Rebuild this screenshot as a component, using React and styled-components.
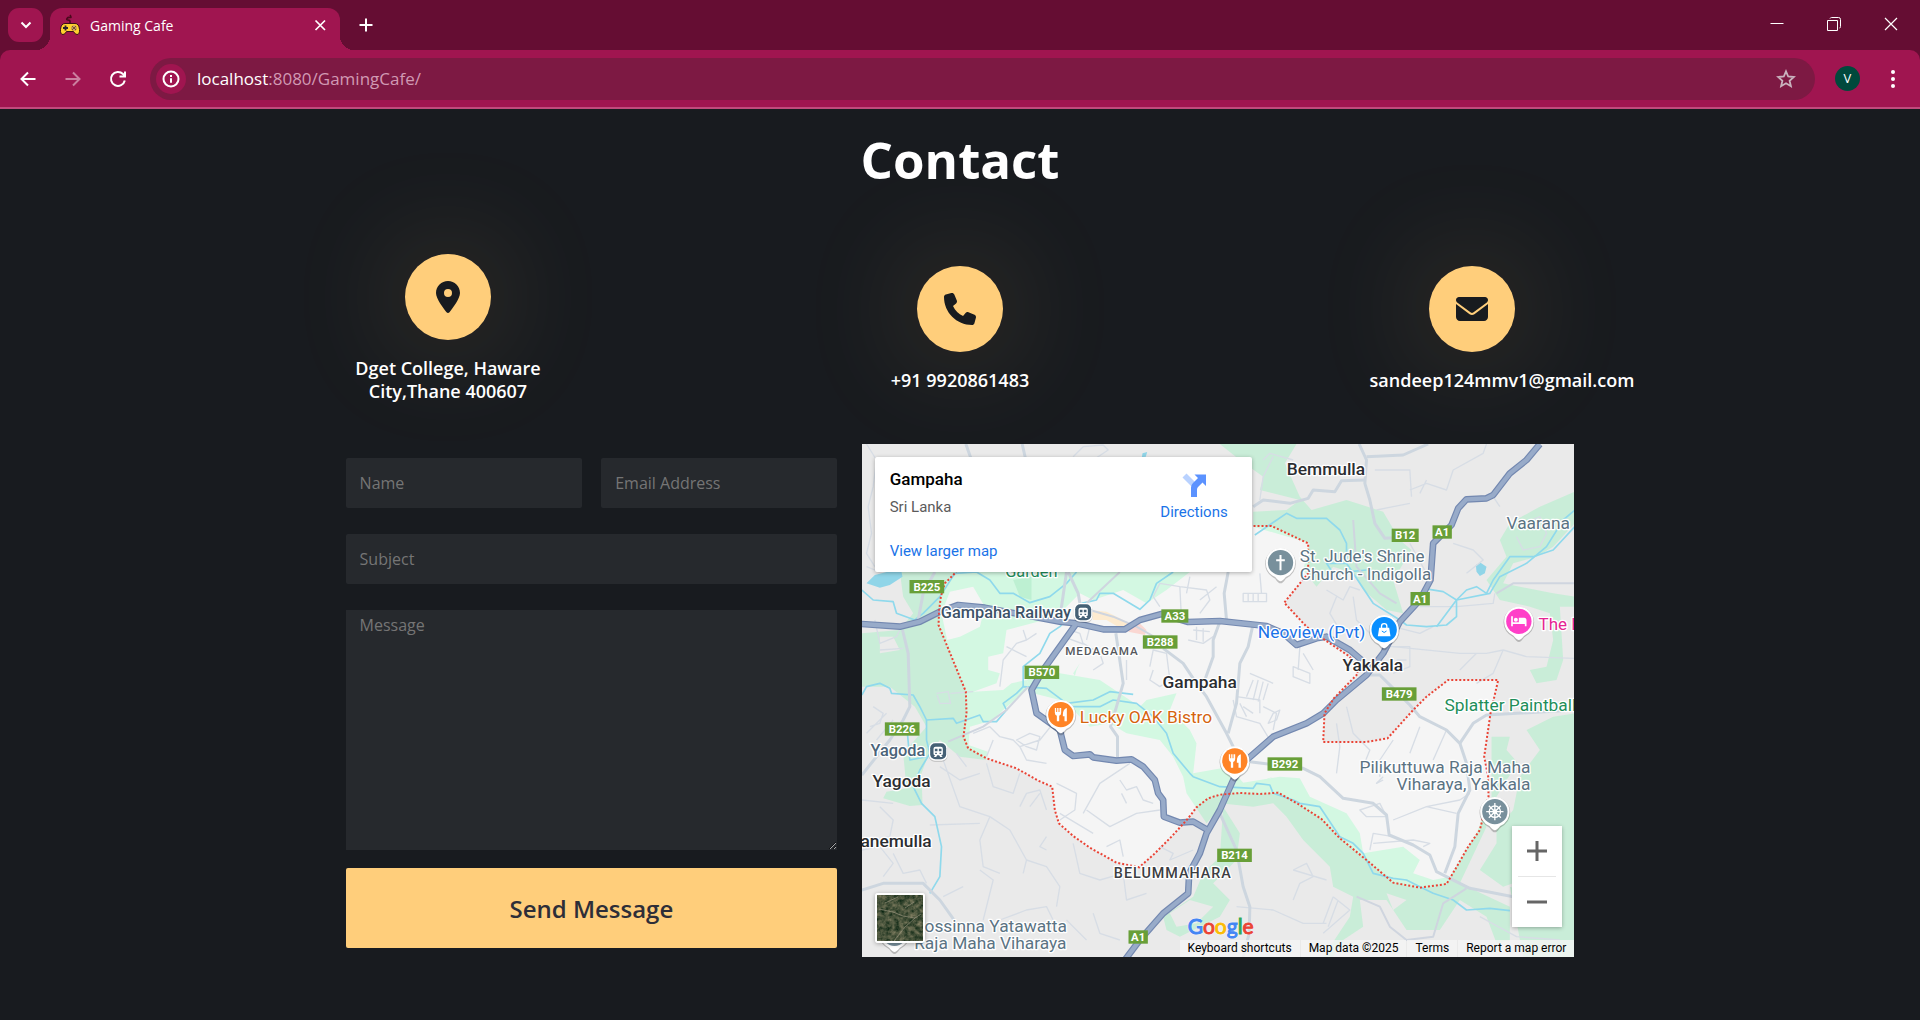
import React from "react";
import styled, { createGlobalStyle, css } from "styled-components";
import { FaLocationDot, FaPhone, FaEnvelope } from "react-icons/fa6";

const c = {
  frame: "#650d33",
  toolbar: "#a01550",
  omnibox: "#7d1943",
  page: "#181b1f",
  field: "#26292d",
  accent: "#ffce7b",
  link: "#1a73e8",
};

const uiFont = '"Segoe UI", "Open Sans", "Noto Sans", sans-serif';
const pageFont = '"Trebuchet MS", "Open Sans", "Noto Sans", sans-serif';
const mapFont = 'Roboto, "Liberation Sans", sans-serif';

const GlobalStyle = createGlobalStyle`
  *, *::before, *::after { box-sizing: border-box; }
  body { margin: 0; background: ${c.page}; font-family: ${pageFont}; }
  button { font: inherit; border: 0; padding: 0; background: none; color: inherit; cursor: pointer; }
  h1, h2, p { margin: 0; }
`;

/* ---------- browser frame ---------- */

const Screen = styled.div`
  min-height: 100vh;
  display: flex;
  flex-direction: column;
  overflow: hidden;
`;

const TabStrip = styled.header`
  display: flex;
  height: 50px;
  padding: 8px 1px 0 8px;
  background: ${c.frame};
  color: #fff;
  font-family: ${uiFont};
`;

const TabSearch = styled.button`
  display: grid;
  place-items: center;
  width: 35px;
  height: 34px;
  margin-right: 7px;
  border-radius: 11px;
  background: ${c.toolbar};
`;

const Tab = styled.div`
  position: relative;
  display: flex;
  align-items: center;
  gap: 10px;
  width: 290px;
  height: 42px;
  padding: 0 10px 8px 10px;
  border-radius: 12px 12px 0 0;
  background: ${c.toolbar};
  font-size: 14px;

  &::before,
  &::after {
    content: "";
    position: absolute;
    bottom: 0;
    width: 14px;
    height: 14px;
  }
  &::before {
    right: 100%;
    background: radial-gradient(circle at 0 0, transparent 14px, ${c.toolbar} 14px);
  }
  &::after {
    left: 100%;
    background: radial-gradient(circle at 100% 0, transparent 14px, ${c.toolbar} 14px);
  }
`;

const TabTitle = styled.span`
  flex: 1;
`;

const FlatButton = styled.button`
  display: grid;
  place-items: center;
  width: ${(p) => p.$w || 20}px;
  height: ${(p) => p.$h || 20}px;
  opacity: ${(p) => (p.disabled ? 0.45 : 1)};
`;

const NewTab = styled(FlatButton)`
  margin: 3px 0 0 12px;
`;

const WindowButtons = styled.div`
  display: flex;
  margin-left: auto;
`;

const ToolbarBack = styled.div`
  background: ${c.frame};
`;

const Toolbar = styled.div`
  display: flex;
  align-items: center;
  height: 59px;
  padding: 0 10px 0 5px;
  border-bottom: 2px solid #c04a7c;
  border-radius: 10px 10px 0 0;
  background: ${c.toolbar};
  color: #fff;
  font-family: ${uiFont};
`;

const Omnibox = styled.div`
  flex: 1;
  display: flex;
  align-items: center;
  height: 42px;
  margin: 0 20px 0 10px;
  padding: 0 19px 0 6px;
  border-radius: 21px;
  background: ${c.omnibox};
`;

const SiteInfo = styled.button`
  display: grid;
  place-items: center;
  width: 30px;
  height: 30px;
  margin-right: 11px;
  border-radius: 50%;
  background: ${c.toolbar};
`;

const Address = styled.div`
  flex: 1;
  font-size: 17px;
  color: #d19ab3;
  outline: none;

  strong {
    font-weight: 400;
    color: #fff;
  }
`;

const Avatar = styled.button`
  width: 25px;
  height: 25px;
  margin-right: 15px;
  border-radius: 50%;
  background: #00493c;
  font-size: 13px;
  line-height: 25px;
`;

/* ---------- contact page ---------- */

const Page = styled.main`
  flex: 1;
  color: #fff;
`;

const Heading = styled.h1`
  padding-top: 14px;
  text-align: center;
  font-size: 51px;
  line-height: 72px;
  font-weight: 700;
`;

const Channels = styled.section`
  display: flex;
  align-items: center;
  width: 80%;
  margin: 59px auto 0;
`;

const ChannelCell = styled.div`
  flex: 1 1 0;
  min-width: 0;
  display: flex;
  justify-content: center;
`;

const Channel = styled.div`
  width: 40%;
  display: flex;
  flex-direction: column;
  align-items: center;
`;

const Disc = styled.div`
  display: grid;
  place-items: center;
  width: 86px;
  height: 86px;
  border-radius: 50%;
  background: ${c.accent};
  color: ${c.page};
  font-size: 32px;
  box-shadow: 0 0 120px rgba(255, 206, 123, 0.22);
`;

const ChannelText = styled.p`
  position: relative;
  width: 100%;
  margin-top: 17px;
  text-align: center;
  font-size: 18px;
  line-height: 23px;
  font-weight: 600;
`;

const Lower = styled.section`
  display: flex;
  justify-content: space-between;
  width: 64%;
  margin: 41px auto 0;
`;

const Form = styled.form`
  width: 40%;
  display: grid;
  grid-template-columns: 48% 48%;
  justify-content: space-between;
  align-content: start;
  row-gap: 26px;
  padding-top: 14px;
`;

const fieldStyle = css`
  display: block;
  width: 100%;
  border: 0;
  border-radius: 2px;
  outline: none;
  background: ${c.field};
  color: #fff;
  font-family: ${pageFont};
  font-size: 16px;

  &::placeholder {
    color: #757575;
  }
`;

const Input = styled.input`
  ${fieldStyle}
  grid-column: ${(p) => (p.$wide ? "1 / -1" : "auto")};
  height: 50px;
  padding: 0 14px;
`;

const TextArea = styled.textarea`
  ${fieldStyle}
  grid-column: 1 / -1;
  height: 240px;
  padding: 4px 14px;
  border-radius: 0;
  resize: vertical;
`;

const Submit = styled.button`
  grid-column: 1 / -1;
  height: 80px;
  margin-top: -8px;
  border-radius: 2px;
  background: ${c.accent};
  color: #2e2e38;
  font-size: 24px;
  font-weight: 600;
`;

/* ---------- map ---------- */

const MapFrame = styled.div`
  position: relative;
  width: 58%;
  height: 513px;
  overflow: hidden;
  background: #ebebeb;
  font-family: ${mapFont};
`;

const MapDrawing = styled.svg`
  display: block;
  width: 100%;
  height: 100%;
`;

const PlaceCard = styled.div`
  position: absolute;
  top: 13px;
  left: 13px;
  display: flex;
  justify-content: space-between;
  width: 377px;
  height: 115px;
  padding: 12px 24px 11px 15px;
  border-radius: 2px;
  background: #fff;
  box-shadow: 0 1px 4px rgba(0, 0, 0, 0.3);
  font-size: 15px;
  line-height: 20px;
`;

const PlaceInfo = styled.div`
  display: flex;
  flex-direction: column;
  color: #5b5b5b;
`;

const PlaceName = styled.h2`
  margin-bottom: 7px;
  color: #000;
  font-size: 17px;
  line-height: 21px;
  font-weight: 500;
`;

const MapLink = styled.a`
  display: flex;
  flex-direction: column;
  align-items: center;
  gap: 4px;
  margin-top: ${(p) => (p.$low ? "auto" : "3px")};
  color: ${c.link};
  text-decoration: none;
`;

const Zoom = styled.div`
  position: absolute;
  right: 12px;
  bottom: 30px;
  width: 50px;
  padding: 0 6px;
  background: #fff;
  box-shadow: 0 1px 4px rgba(0, 0, 0, 0.3);
`;

const ZoomButton = styled.button`
  display: grid;
  place-items: center;
  width: 100%;
  height: 50px;

  & + & {
    height: 51px;
    border-top: 1px solid #e6e6e6;
  }
`;

const Satellite = styled.button`
  position: absolute;
  left: 13px;
  bottom: 14px;
  width: 50px;
  height: 50px;
  overflow: hidden;
  border: 2px solid #fff;
  border-radius: 3px;
  box-shadow: 0 1px 4px rgba(0, 0, 0, 0.3);

  svg {
    display: block;
  }
`;

const Logo = styled.a`
  position: absolute;
  left: 326px;
  bottom: 18px;
  font-family: Lato, ${mapFont};
  font-size: 21px;
  line-height: 26px;
  font-weight: 400;
  text-decoration: none;
  text-shadow: 0 0 2px #fff, 0 0 2px #fff;
`;

const Letter = styled.span`
  color: ${(p) => p.$color};
  -webkit-text-stroke: 1px ${(p) => p.$color};
`;

const Credits = styled.div`
  position: absolute;
  right: 0;
  bottom: 0;
  display: flex;
  gap: 1px;
  height: 17px;
  color: #000;
  font-size: 12px;
  line-height: 17px;

  & > * {
    padding: 0 8px;
    background: rgba(245, 245, 245, 0.8);
    color: inherit;
    font-size: 12px;
    text-decoration: none;
  }
`;

/* Map artwork, drawn in a 2139 x 1539 unit space. */

const boundary =
  "M330 330 285 400 255 430 243 470 238 510 236 555 275 650 318 755 320 820 311 890 325 925 380 955 470 985 535 1022 577 1040 585 1110 597 1150 640 1188 690 1223 770 1268 838 1282 880 1245 935 1190 985 1135 1010 1102 1045 1075 1080 1064 1140 1059 1200 1062 1255 1058 1315 1092 1385 1137 1440 1195 1520 1260 1600 1328 1680 1343 1760 1332 1785 1290 1825 1220 1860 1170 1870 1130 1886 1070 1885 1010 1873 950 1892 820 1915 720 1765 720 1700 770 1660 810 1583 895 1520 906 1390 906 1394 820 1422 775 1495 700 1470 650 1395 600 1340 560 1273 488 1345 400 1345 310 1235 258 1180 258 1000 240Z";

const parks = [
  "M6 580 120 570 160 520 130 470 120 396 990 396 920 450 860 490 790 450 700 480 660 460 590 530 440 570 430 640 385 650 385 690 420 700 410 730 340 755 430 750 455 730 500 720 512 740 430 810 400 840 330 860 326 915 384 935 378 960 300 950 240 900 200 960 185 1000 188 1095 150 1098 70 1075 80 1055 140 1045 130 940 200 860 165 800 90 740 6 740Z",
  "M1080 12H1310L1275 70 1320 170 1355 210 1460 180 1570 215 1620 300 1655 330 1600 420 1630 520 1580 510 1510 450 1480 400 1420 380 1370 440 1330 390 1350 310 1180 260V215L1280 210 1320 180 1200 150 1210 110 1140 60Z",
  "M2145 155 2040 200 1950 250 1920 300 1940 350 1880 420 1920 480 2010 500 2070 520 2080 600 2060 680 2010 690 2030 730 2090 720 2110 660 2100 500H2145V470L2080 460 1930 430 1960 370 2030 350 2080 320 2145 250Z",
  "M2145 820 2080 830 2000 870 2040 930 1980 1010 1960 1110 1910 1170V1210L1860 1290 1930 1340 1960 1330V1430L2145 1470Z",
  "M1895 890H1950L1940 930 1975 970 1940 1020 1910 1070 1895 1120Z",
  "M1080 1070 1140 1030 1260 1010 1320 1015 1350 1070 1460 1120 1500 1180 1510 1240 1630 1220 1680 1260 1660 1300 1720 1320 1770 1310 1850 1180 1870 1130 1880 1160 1800 1330 1950 1400V1500L1910 1510 1880 1430 1800 1380 1740 1470 1640 1470 1580 1380 1500 1380 1510 1460 1450 1500 1420 1551H1390L1470 1430 1480 1370 1420 1340 1410 1280 1330 1200 1280 1130 1240 1090 1180 1100 1080 1090Z",
  "M500 720 560 690 600 700 720 720 840 800 860 780 950 760 930 810 990 870 1010 910 1000 1000 1110 980 1160 1040 1240 1010 1100 1080 1040 1150 980 1060 970 1010 940 950 900 900 800 880 750 850 690 860 640 810 600 780 520 760Z",
  "M1080 1250 1030 1300 1000 1370 910 1430 920 1470 960 1490 1080 1430 1110 1380 1060 1330 1130 1260 1140 1180 1090 1100Z",
  "M640 700 660 670 650 690 645 708Z",
  "M1950 1340 2145 1400V1551H1990Z",
];

const clearings = [
  "M270 455 340 440 375 500 360 560 300 590 262 600 245 520Z",
  "M20 470 110 470 150 520 110 560 40 530Z",
  "M60 590 100 590 120 630 60 640Z",
  "M930 1420 990 1380 1060 1400 1010 1450 950 1460Z",
  "M1580 1360 1640 1380 1600 1410Z",
];

const water = [
  "M6 450 40 480 100 485 110 520 165 540 190 520 240 470 285 400 350 396 390 420 420 460 460 460 510 488 570 470 620 430 650 396",
  "M665 490 710 480 720 460 760 460 840 508 870 480 890 430 940 396",
  "M6 765 20 740 60 730 90 745 95 760 160 765 180 800 200 840 280 835 290 850 360 825 370 845 410 845 440 810 430 790 470 760 490 740 560 745 620 790 700 780 750 755 820 763",
  "M490 740 490 680 540 640 570 580 600 560 620 540",
  "M640 800 680 800 720 800 760 780 830 790 880 830 920 880 940 940 990 1000 1000 1010 1080 1040 1180 1045 1190 1030 1230 1035 1240 1060 1300 1080 1320 1090 1380 1100 1440 1190 1480 1210 1510 1240 1540 1300 1600 1315 1640 1320 1680 1340 1720 1360 1780 1380 1820 1410 1890 1405 1950 1412",
  "M200 840 200 900 210 940 180 990 160 1040 185 1090 225 1130 245 1220 240 1310 210 1360",
  "M1185 285 1280 220 1310 235 1400 235 1440 270 1460 310 1460 370 1500 430 1540 490 1620 540 1640 555 1700 560 1760 555 1790 530 1790 480 1820 450 1850 440 1880 460 1900 420 1950 350 2020 350 2080 330 2145 260",
  "M1690 445 1750 455 1790 480 1730 560 M1790 480 1890 460 1920 410 2000 370 2060 320 2110 240 2145 210",
  "M140 850 150 960 200 950 M1460 370 1400 370 1420 400 1520 390",
];

const streets = [
  "M20 12 50 60 40 140 25 200 35 280 20 340 45 380",
  "M640 50 670 20 730 15 745 30 700 60",
  "M45 540 60 610 110 590 120 570 M60 630 130 625 M20 380 60 396",
  "M230 760 265 755 272 790 240 790 232 765 M272 760 340 755",
  "M420 740 430 660 470 610 500 600 530 580 M440 620 500 650 M500 600 490 570",
  "M610 590 670 612 660 580 630 570 M670 610 720 640 730 670 700 690 M690 560 680 600",
  "M780 640 830 640 M800 660 800 720 M870 680 880 630 920 640 930 720 900 740 870 720 880 690",
  "M900 500 880 470 900 430 960 440 1040 450 1050 480 1020 520 M960 440 965 540 M990 410 980 460 M1020 480 1070 440",
  "M985 600 1030 610 1060 590 M1000 570 1050 575 M1010 560V600 M1030 565V605",
  "M1150 460H1220V485H1150Z M1165 460V485 M1180 460V485 M1195 460V485 M1205 460 1200 400",
  "M1170 700 1240 730 M1180 720 1160 770 M1195 720 1180 780 M1210 725 1195 785 M1225 730 1210 780",
  "M1130 770 1200 780 1200 820 M1150 800 1180 820 M1240 820 1260 810 1250 840 1225 850Z",
  "M1300 680 1350 700 1350 730 1300 710Z M1320 620 1315 690 M1360 690 1330 640",
  "M1400 450 1450 480 1470 440 1500 450 M1430 470 1410 520 1440 570 1430 610 M1480 470 1490 540 1530 580",
  "M1580 620 1650 620 1650 680 1600 700 M1610 660H1640 M1600 560 1680 580 1720 560 M1680 500 1790 500 1900 490 1905 460",
  "M1600 620 1800 640 1880 640 1930 630 2000 650 2145 655 M1800 690 1850 640 M1930 630 1900 700 1850 730",
  "M1650 150 1700 130 1760 150 1780 90 1870 40 1880 12 M1700 120 1680 160 M1920 200 1900 170 M1780 310 1840 330 1870 360 1820 400 M1650 190 1600 200 1550 210",
  "M1545 90 1650 90 1655 170 M1700 400 1650 310",
  "M1970 260 2040 230 2060 280 2040 320 1990 330 1970 290",
  "M1120 780 1130 830 1200 850 1230 900 M1140 790 1160 830 M1210 800 1250 820 1240 870",
  "M1460 800 1480 880 1530 930 1510 980 M1430 850 1440 920 1430 1000 M1600 900 1560 960 1560 1010 M1680 860 1650 940 M1760 870 1720 960 M1570 1010 1550 1030 1570 1020",
  "M1500 1110 1560 1090 1580 1130 1520 1130Z M1600 1140 1700 1100 1800 1080 1830 1060 M1700 1100 1790 1120",
  "M1530 1230 1540 1180 1600 1190 M1540 1210 1660 1200 1710 1210 1690 1220",
  "M340 880 390 860 420 890 460 900 480 920 540 900 580 850 M470 900 510 880 540 890 530 930 500 920Z M480 920 500 960 560 970 M400 900 380 950",
  "M590 1030 610 1040 650 1060 645 1110 600 1140 M670 1120 720 1030 810 970 M680 1110 750 1160 830 1120 900 1110 M780 1020 800 1050 830 1040 850 1080 880 1090 M785 1060 800 1090 M740 1220 780 1200 790 1250",
  "M600 1120 650 1150 700 1180 M540 1060 510 1100 M480 1100 500 1060 540 1050 560 1110",
  "M240 980 300 1020 360 1000 M320 980 290 940 M380 970 400 1040 460 1060 480 1000 M250 960 300 1100 390 1130 450 1170 500 1260 490 1300 M390 1130 360 1200 370 1280 420 1300",
  "M210 1155 360 1150 M6 1080 100 1090 M60 1100 100 1140 90 1190 40 1200 M6 1230 60 1220 100 1270 70 1310 M100 1240 130 1300 180 1290 200 1330",
  "M500 1260 560 1280 600 1340 590 1400 M560 1190 540 1220 560 1230 M640 1210 660 1300 720 1320 790 1300 800 1380 860 1360 M370 1440 400 1320 360 1290 M420 1440 500 1410 560 1400 580 1440 M620 1440 680 1500 M700 1420 720 1480 780 1500 M250 1370 310 1340 M900 1220 940 1240 930 1260 1000 1230",
  "M1130 1400 1240 1410 1330 1450 1400 1450 M1300 1290 1340 1270 1360 1310 1320 1330 1300 1380 M1420 1370 1390 1450 M1435 1380 1405 1460 M1420 1370 1470 1410 1390 1480 M1300 1290 1400 1320",
  "M1210 60 1230 40 1300 60 M1200 180 1210 110 1240 50",
  "M40 800 70 820 60 850 30 860 M20 880 80 820 M50 900 100 840 M1860 1430 1970 1490 2100 1500",
];

const avenues = [
  "M225 396 190 460 175 540",
  "M128 570 145 640 150 800 130 840 90 900 6 1005",
  "M318 12 335 60 M487 12 498 60",
  "M620 396 605 500 600 530 M625 396 655 460 662 500",
  "M1105 396 1093 460 1100 540",
  "M1080 545 1060 600 1060 650 1035 720",
  "M910 625 970 670 1010 730 1040 770 1100 880 1125 930",
  "M1178 560 1165 620 1140 670 1130 790 1105 880",
  "M768 580 790 730 770 800 752 860 773 890 773 955",
  "M1498 12 1520 60 1515 130 1530 180 1545 250 1575 295 1600 293",
  "M1180 200 1210 180 1290 190 1345 175 1360 150 1425 155 1445 122 1515 120",
  "M1520 50 1630 45 1705 12",
  "M1080 1120 1130 1230 1150 1340 1170 1400 1168 1480 1150 1551",
  "M1170 965 1330 985 1380 1010 1450 1075 1540 1090 1580 1125 1588 1185 1660 1215 1710 1245 1730 1295 1770 1315 1830 1345 1960 1370",
  "M1520 705 1560 705 1595 740 1650 795 1680 830 1760 870 1800 910 1820 970 1830 1050 1795 1120 1785 1220 1755 1300",
  "M1800 910 1840 850 1880 825 2145 810",
  "M6 1350 70 1330 190 1330 240 1380 290 1450",
];

const lanes = [
  "M1490 1370 1560 1400 1590 1460 1640 1500 1720 1490 1750 1390 1820 1345",
  "M1910 460 1960 430 2145 430 M1480 240 1490 380 1560 460 1610 490",
  "M265 905 370 860 440 810 505 740 M680 490 780 396 M690 510 760 530 830 560 900 600",
];

const highways = [
  "M6 552 120 560 180 545 240 515 295 495 375 503 600 545 650 550 730 568 795 568 840 540 905 522 985 546 1080 543 1220 558 1270 580 1310 615 1370 595 1400 590 1470 630 1505 660",
  "M650 550 600 620 550 690 515 750 530 820 600 870 615 930 640 948 690 943 700 952 770 962 815 958 850 980 885 1020 895 1060 910 1080 912 1130 960 1148 1000 1145 1040 1168",
  "M2040 12 2000 60 1950 100 1900 165 1880 175 1820 178 1795 205 1775 255 1720 310 1712 420 1680 480 1620 545 1570 640 1520 705 1430 780 1390 820 1340 850 1240 890 1160 960 1120 1020 1080 1110 1040 1180 1020 1240 988 1300 985 1360 910 1420 840 1500 795 1560",
];

const shields = [
  ["B225", 201, 440], ["B226", 127, 867], ["B570", 546, 697], ["A33", 945, 528],
  ["B288", 901, 606], ["B12", 1636, 286], ["A1", 1747, 276], ["A1", 1681, 476],
  ["B479", 1618, 762], ["B292", 1275, 972], ["B214", 1124, 1246], ["A1", 835, 1491],
];

const labels = [
  { t: "Garden", x: 436, y: 410, s: 49, f: "#1e8e5a" },
  { t: "Gampaha Railway", x: 243, y: 534, s: 49, f: "#3c5267", w: 500 },
  { t: "Yagoda", x: 32, y: 948, s: 49, f: "#4a6379", w: 500 },
  { t: "Yagoda", x: 38, y: 1042, s: 52, f: "#2b2d31", w: 500 },
  { t: "Gampaha", x: 908, y: 744, s: 52, f: "#2b2d31", w: 500 },
  { t: "Bemmulla", x: 1281, y: 104, s: 52, f: "#2b2d31", w: 500 },
  { t: "Yakkala", x: 1448, y: 692, s: 52, f: "#2b2d31", w: 500 },
  { t: "anemulla", x: 2, y: 1221, s: 52, f: "#2b2d31", w: 500 },
  { t: "MEDAGAMA", x: 616, y: 645, s: 35, f: "#55585c", w: 500, ls: 3 },
  { t: "BELUMMAHARA", x: 762, y: 1315, s: 43, f: "#3c3e42", w: 500, ls: 3 },
  { t: "Lucky OAK Bistro", x: 660, y: 848, s: 52, f: "#d5640f" },
  { t: "Neoview (Pvt)", x: 1194, y: 595, s: 52, f: "#1a73e8" },
  { t: "The F", x: 2036, y: 570, s: 51, f: "#e52592" },
  { t: "Vaarana", x: 1940, y: 266, s: 52, f: "#5b7383" },
  { t: "St. Jude's Shrine", x: 1320, y: 367, s: 51, f: "#5b7383" },
  { t: "Church - Indigolla", x: 1320, y: 420, s: 51, f: "#5b7383" },
  { t: "Splatter Paintball", x: 1754, y: 812, s: 52, f: "#1e8e5a" },
  { t: "Pilikuttuwa Raja Maha", x: 2012, y: 999, s: 52, f: "#5b7383", end: true },
  { t: "Viharaya, Yakkala", x: 2012, y: 1051, s: 52, f: "#5b7383", end: true },
  { t: "ossinna Yatawatta", x: 194, y: 1475, s: 52, f: "#5b7383" },
  { t: "Raja Maha Viharaya", x: 163, y: 1527, s: 52, f: "#5b7383" },
];

const Fork = () => (
  <path
    fill="#fff"
    d="M-18-20v14q0 7 6 9v17h7V3q6-2 6-9v-14h-5v12h-3v-12h-4v12h-3v-12zM18-20q-12 3-12 20v5h5v15h7z"
  />
);
const Bed = () => (
  <path fill="#fff" d="M-23-15h5v18h18v-14h16q7 0 7 8v18h-5V8h-36v7h-5zM-9-11a6 6 0 1 1 0 12 6 6 0 0 1 0-12z" />
);
const Cross = () => <path fill="#fff" d="M-3-23h6v13h10v6H3v27h-6V-4h-10v-6h10z" />;
const Bag = () => (
  <g>
    <path fill="#fff" d="M-15-6h30l4 26h-38z" />
    <path fill="none" stroke="#fff" strokeWidth="4" d="M-8-4v-6a8 8 0 0 1 16 0v6" />
    <path fill="none" stroke="#0a8fff" strokeWidth="3" d="M-7 4q7 9 14 0" />
  </g>
);
const Wheel = () => (
  <g fill="none" stroke="#fff" strokeWidth="4">
    <circle r="17" />
    <circle r="5" />
    <path d="M0-26V26M-26 0H26M-18-18 18 18M18-18-18 18" />
  </g>
);

const Pin = ({ x, y, color, children }) => (
  <g transform={`translate(${x} ${y})`}>
    <path fill="rgba(0,0,0,.22)" d="M0 62q-7 0-16-14Q-46 32-46 3a46 46 0 0 1 92 0q0 29-30 45Q7 62 0 62z" />
    <path fill="#fff" d="M0 56q-5 0-16-13Q-44 30-44 0a44 44 0 0 1 88 0q0 30-28 43Q5 56 0 56z" />
    <circle r="38" fill={color} />
    {children}
  </g>
);

const Station = ({ x, y }) => (
  <g transform={`translate(${x} ${y})`}>
    <rect x="-28" y="-27" width="56" height="57" rx="18" fill="rgba(0,0,0,.2)" />
    <rect x="-28" y="-29" width="56" height="56" rx="18" fill="#fff" />
    <rect x="-24" y="-25" width="48" height="48" rx="15" fill="#456075" />
    <path fill="#fff" d="M-8-15H8q6 0 6 6V6q0 5-5 5l4 5H6L3 11h-6l-3 5h-7l4-5q-5 0-5-5V-9q0-6 6-6z" />
    <path fill="#456075" d="M-10-9h8v8h-8zM2-9h8v8H2zM-9 3h5v4h-5zM4 3h5v4H4z" />
  </g>
);

function MapArt() {
  const lines = (list, stroke, width) => (
    <g fill="none" stroke={stroke} strokeWidth={width} strokeLinejoin="round">
      {list.map((d) => (
        <path key={d} d={d} />
      ))}
    </g>
  );
  return (
    <MapDrawing viewBox="6 12 2139 1539" preserveAspectRatio="xMidYMid slice" role="img" aria-label="Map of Gampaha">
      <rect x="0" y="0" width="2160" height="1560" fill="#f5f5f5" />
      <g fill="#d3f8e2">{parks.map((d) => <path key={d} d={d} />)}</g>
      <g fill="#f5f5f5">{clearings.map((d) => <path key={d} d={d} />)}</g>
      <path fill="#fdebd0" d="M690 510 740 515 830 560 800 575 740 540 700 540Z" />
      <path fill="#fad7d2" d="M835 545 860 570 855 585 805 575Z" />
      <path fill="#bdf0d2" d="M460 420 515 410 515 480 480 470Z" />
      <path fillRule="evenodd" fill="rgba(0,0,0,.042)" d={`M0 0H2160V1560H0Z${boundary}`} />
      <path fill="#90d5e8" d="M20 430 45 405 80 396H125L128 410 90 435 60 443ZM1848 375 1862 368 1880 380 1875 400 1860 408 1850 395ZM848 40 862 36 858 50 846 52Z" />
      {lines(streets, "#d7dde5", 4)}
      {lines(water, "#8fd9ec", 5)}
      {lines(lanes, "#cfd5df", 6)}
      {lines(avenues, "#cdd6df", 9)}
      {lines(highways, "#7388b0", 20)}
      {lines(highways, "#98abc9", 13)}
      <path fill="none" stroke="#ea4335" strokeWidth="6" strokeDasharray="6 6" d={boundary} />

      {shields.map(([t, x, y]) => {
        const w = 12 + t.length * 23;
        return (
          <g key={t + x}>
            <rect x={x - w / 2} y={y - 20} width={w} height="40" fill="#689f38" />
            <text x={x} y={y + 12} fill="#fff" fontSize="34" fontWeight="700" textAnchor="middle">
              {t}
            </text>
          </g>
        );
      })}

      {labels.map((l) => (
        <text
          key={l.t + l.y}
          x={l.x}
          y={l.y}
          fontSize={l.s}
          fontWeight={l.w || 400}
          fill={l.f}
          letterSpacing={l.ls}
          textAnchor={l.end ? "end" : "start"}
          stroke="#fff"
          strokeWidth="8"
          strokeLinejoin="round"
          paintOrder="stroke"
        >
          {l.t}
        </text>
      ))}

      <Station x={670} y={518} />
      <Station x={235} y={935} />
      <Pin x={603} y={824} color="#ff8426"><Fork /></Pin>
      <Pin x={1125} y={963} color="#ff8426"><Fork /></Pin>
      <Pin x={1262} y={368} color="#78909c"><Cross /></Pin>
      <Pin x={1573} y={569} color="#0a8fff"><Bag /></Pin>
      <Pin x={1977} y={544} color="#ff3fc8"><Bed /></Pin>
      <Pin x={1905} y={1115} color="#78909c"><Wheel /></Pin>
      <Pin x={104} y={1480} color="#78909c" />
    </MapDrawing>
  );
}

const logoLetters = [
  ["G", "#4285f4"], ["o", "#ea4335"], ["o", "#fbbc04"], ["g", "#4285f4"], ["l", "#34a853"], ["e", "#ea4335"],
];

const Line = ({ size = 20, d, width = 2, children }) => (
  <svg width={size} height={size} viewBox="0 0 20 20" fill="none" stroke="currentColor" strokeWidth={width} aria-hidden="true">
    {d && <path d={d} />}
    {children}
  </svg>
);

function Gamepad() {
  return (
    <svg width="20" height="22" viewBox="0 0 20 22" aria-hidden="true">
      <path d="M10 10V7.500q0-1.500-2-1.500T7 4.500 10 3.500 10 1" fill="none" stroke="#4a0a1c" strokeWidth="1.500" />
      <path d="M5 9.500h10q4 0 4.500 6 .3 5-2.500 5-2 0-3.500-3h-7q-1.500 3-3.500 3-2.800 0-2.500-5 .5-6 4.500-6z" fill="#ffd02e" stroke="#3a1116" />
      <path d="M5.500 11.500v5M3 14h5" stroke="#2b2030" strokeWidth="1.800" />
      <circle cx="14" cy="14" r="2.600" fill="#7a4a28" />
      <path d="M14 11.500v1.600M14 15v1.600M11.500 14h1.600M15 14h1.600" stroke="#ffe9a0" strokeWidth="1.200" />
    </svg>
  );
}

function Browser() {
  return (
    <>
      <TabStrip>
        <TabSearch aria-label="Search tabs"><Line d="M5.500 7.500 10 12l4.500-4.500" /></TabSearch>
        <Tab>
          <Gamepad />
          <TabTitle>Gaming Cafe</TabTitle>
          <FlatButton aria-label="Close tab"><Line width={1.7} d="M5.500 5.500l9.500 9.500M15 5.500 5.500 15" /></FlatButton>
        </Tab>
        <NewTab $w={28} $h={28} aria-label="New tab"><Line d="M10 3.500v13M3.500 10h13" /></NewTab>
        <WindowButtons>
          <FlatButton $w={57} $h={32} aria-label="Minimize"><Line width={1} d="M3.500 9.500h13" /></FlatButton>
          <FlatButton $w={57} $h={32} aria-label="Restore">
            <Line width={1} d="M3.500 6.500h10v10h-10zM6 4.500q.5-1 1.500-1h7q2 0 2 2v7q0 1.500-1 1.500" />
          </FlatButton>
          <FlatButton $w={57} $h={32} aria-label="Close"><Line width={1.2} d="M4 4l12 12M16 4 4 16" /></FlatButton>
        </WindowButtons>
      </TabStrip>
      <ToolbarBack>
        <Toolbar>
          <FlatButton $w={45} $h={40} aria-label="Back"><Line d="M17.500 10H4M10 3.500 3.500 10l6.500 6.500" /></FlatButton>
          <FlatButton $w={45} $h={40} aria-label="Forward" disabled><Line d="M2.500 10H16M10 3.500l6.500 6.500-6.500 6.500" /></FlatButton>
          <FlatButton $w={45} $h={40} aria-label="Reload">
            <Line d="M16.800 11.500A7 7 0 1 1 15 5l2 2M17 2.500V7.500h-5.500" />
          </FlatButton>
          <Omnibox>
            <SiteInfo aria-label="Site information">
              <Line><circle cx="10" cy="10" r="7.500" /><path d="M10 9.200v4.600M10 6v2" /></Line>
            </SiteInfo>
            <Address role="textbox" aria-label="Address" tabIndex={0}>
              <strong>localhost</strong>:8080/GamingCafe/
            </Address>
            <FlatButton aria-label="Bookmark">
              <svg width="20" height="20" viewBox="0 0 20 20" fill="none" stroke="#c9b3be" strokeWidth="1.800" aria-hidden="true">
                <path d="M10 2.300l2.200 5.200 5.600.5-4.200 3.700 1.300 5.500L10 14.300l-4.900 2.900 1.300-5.500L2.200 8l5.600-.5z" />
              </svg>
            </FlatButton>
          </Omnibox>
          <Avatar aria-label="Profile V">V</Avatar>
          <FlatButton $w={35} $h={40} aria-label="Menu">
            <svg width="20" height="20" viewBox="0 0 20 20" fill="currentColor" aria-hidden="true">
              <circle cx="10" cy="3" r="2" /><circle cx="10" cy="10" r="2" /><circle cx="10" cy="17" r="2" />
            </svg>
          </FlatButton>
        </Toolbar>
      </ToolbarBack>
    </>
  );
}

function SatelliteArt() {
  return (
    <svg width="46" height="46" viewBox="0 0 46 46" aria-hidden="true">
      <filter id="terrain" colorInterpolationFilters="sRGB">
        <feTurbulence type="fractalNoise" baseFrequency="0.22" numOctaves="4" seed="8" />
        <feColorMatrix values="0.6 0 0 0 -0.02  0.45 0 0 0 0.1  0.4 0 0 0 0.03  0 0 0 0 1" />
      </filter>
      <rect width="46" height="46" fill="#3f5638" />
      <rect width="46" height="46" filter="url(#terrain)" />
      <path d="M8 8 21 2M2 14l14 3 10 4 12 2 6-4M17 46l11-14 10-9M28 13l9-6" fill="none" stroke="#b7ad98" strokeWidth="1" opacity=".5" />
    </svg>
  );
}

function ContactMap() {
  return (
    <MapFrame>
      <MapArt />
      <PlaceCard>
        <PlaceInfo>
          <PlaceName>Gampaha</PlaceName>
          <p>Sri Lanka</p>
          <MapLink $low href="#map">View larger map</MapLink>
        </PlaceInfo>
        <MapLink href="#directions">
          <svg width="26" height="26" viewBox="0 0 26 26" aria-hidden="true">
            <path d="M1.500 5.500 5.500 1.500 14 10v5h-3z" fill="#b9d2ff" />
            <path d="M10 25V15.500q0-2.500 2-4.500l5-5-3.500-3.500H25V14l-3.500-3.500-4.500 4.500q-1 1-1 2.500V25z" fill="#5b92ff" />
          </svg>
          Directions
        </MapLink>
      </PlaceCard>
      <Satellite aria-label="Show satellite imagery"><SatelliteArt /></Satellite>
      <Logo href="#google" aria-label="Google">
        {logoLetters.map(([ch, color], i) => (
          <Letter key={i} $color={color}>{ch}</Letter>
        ))}
      </Logo>
      <Zoom>
        <ZoomButton aria-label="Zoom in">
          <svg width="22" height="22" viewBox="0 0 22 22" aria-hidden="true"><path d="M11 1v20M1 11h20" stroke="#666" strokeWidth="3" /></svg>
        </ZoomButton>
        <ZoomButton aria-label="Zoom out">
          <svg width="22" height="22" viewBox="0 0 22 22" aria-hidden="true"><path d="M1 11h20" stroke="#666" strokeWidth="3" /></svg>
        </ZoomButton>
      </Zoom>
      <Credits>
        <button type="button">Keyboard shortcuts</button>
        <span>Map data ©2025</span>
        <a href="#terms">Terms</a>
        <a href="#report">Report a map error</a>
      </Credits>
    </MapFrame>
  );
}

const channels = [
  { icon: <FaLocationDot />, text: "Dget College, Haware City,Thane 400607" },
  { icon: <FaPhone />, text: "+91 9920861483" },
  { icon: <FaEnvelope />, text: "sandeep124mmv1@gmail.com" },
];

export default function App() {
  return (
    <Screen>
      <GlobalStyle />
      <Browser />
      <Page>
        <Heading>Contact</Heading>
        <Channels>
          {channels.map(({ icon, text }) => (
            <ChannelCell key={text}>
              <Channel>
                <Disc>{icon}</Disc>
                <ChannelText>{text}</ChannelText>
              </Channel>
            </ChannelCell>
          ))}
        </Channels>
        <Lower>
          <Form onSubmit={(e) => e.preventDefault()}>
            <Input type="text" placeholder="Name" aria-label="Name" />
            <Input type="email" placeholder="Email Address" aria-label="Email Address" />
            <Input $wide type="text" placeholder="Subject" aria-label="Subject" />
            <TextArea placeholder="Message" aria-label="Message" />
            <Submit type="submit">Send Message</Submit>
          </Form>
          <ContactMap />
        </Lower>
      </Page>
    </Screen>
  );
}
